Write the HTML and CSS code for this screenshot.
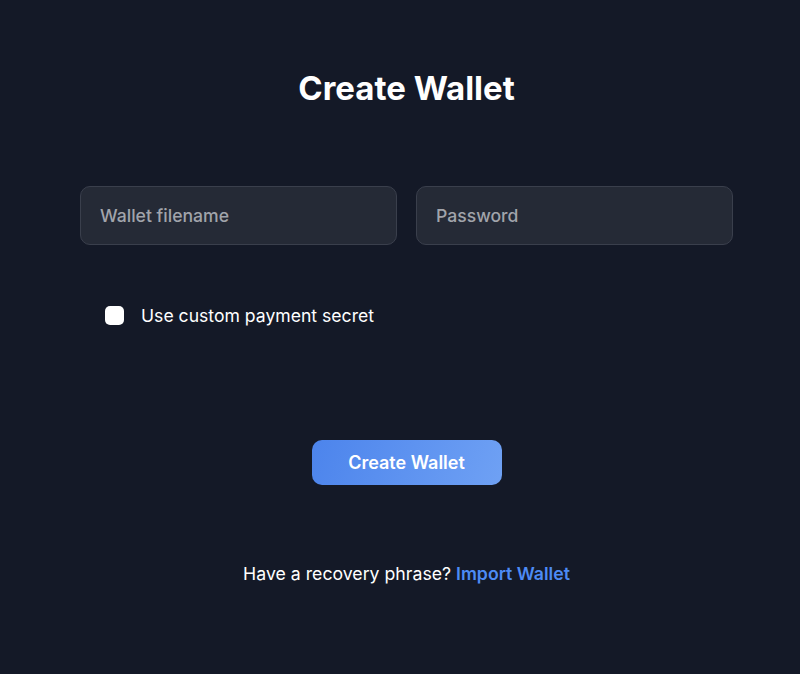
FILE: index.html
```html
<!DOCTYPE html>
<html lang="en">
<head>
<meta charset="utf-8">
<title>Create Wallet</title>
<link rel="stylesheet" href="styles.css">
</head>
<body>
<main class="page">
  <h1 class="title">Create Wallet</h1>
  <div class="fields">
    <input class="field" type="text" placeholder="Wallet filename">
    <input class="field" type="password" placeholder="Password">
  </div>
  <label class="check">
    <span class="box"></span>
    <span class="check-label">Use custom payment secret</span>
  </label>
  <div class="actions">
    <button class="btn" type="button">Create Wallet</button>
  </div>
  <p class="footer">Have a recovery phrase? <a class="link" href="#">Import Wallet</a></p>
</main>
</body>
</html>
```

FILE: styles.css
```css
html, body {
  margin: 0;
  padding: 0;
  background: #141927;
  height: 100%;
}
body {
  font-family: Inter, "Noto Sans", sans-serif;
  color: #ffffff;
}
.page {
  width: 653px;
  margin: 0 0 0 80px;
  padding-top: 66px;
  display: flex;
  flex-direction: column;
}
.title {
  margin: 0;
  text-align: center;
  font-size: 33px;
  font-weight: 700;
  line-height: 44px;
}
.fields {
  margin-top: 76px;
  display: grid;
  grid-template-columns: 1fr 1fr;
  gap: 19px;
}
.field {
  box-sizing: border-box;
  height: 59px;
  border-radius: 10px;
  border: 1px solid #3a3f4c;
  background: #252a36;
  padding: 0 19px;
  font-family: inherit;
  font-size: 17.6px;
  font-weight: 500;
  color: #fff;
  outline: none;
}
.field::placeholder {
  color: #a1a4ab;
}
.check {
  margin-top: 59px;
  margin-left: 25px;
  display: flex;
  align-items: center;
  gap: 17px;
  height: 22px;
}
.box {
  width: 19px;
  height: 19px;
  border-radius: 5px;
  background: #ffffff;
}
.check-label {
  font-size: 17.6px;
  font-weight: 400;
}
.actions {
  margin-top: 114px;
  display: flex;
  justify-content: center;
}
.btn {
  width: 190px;
  height: 45px;
  border: none;
  border-radius: 10px;
  background: linear-gradient(110deg, #4c84ec 0%, #6fa1f4 100%);
  color: #fff;
  font-family: inherit;
  font-size: 18px;
  font-weight: 600;
}
.footer {
  margin: 77px 0 0;
  text-align: center;
  font-size: 17.7px;
  line-height: 24px;
}
.link {
  color: #4d8bf5;
  font-weight: 600;
  text-decoration: none;
}
```
